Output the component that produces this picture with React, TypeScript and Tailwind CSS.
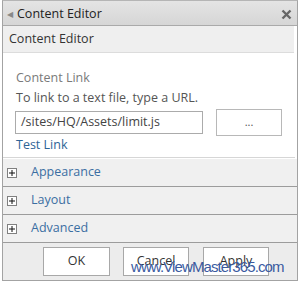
import React from 'react';

const sections = ['Appearance', 'Layout', 'Advanced'];

function PlusBox() {
  return (
    <span className="flex h-[10px] w-[10px] items-center justify-center border border-[#808080] bg-white">
      <svg width="6" height="6" viewBox="0 0 6 6" aria-hidden="true">
        <path d="M0 3h6M3 0v6" stroke="#111" strokeWidth="1" />
      </svg>
    </span>
  );
}

export default function App() {
  return (
    <div
      className="relative h-[284px] w-[302px] overflow-hidden bg-white text-[12.5px] text-[#444]"
      style={{ fontFamily: '"Open Sans", "Noto Sans", sans-serif' }}
    >
      <div className="ml-[2px] flex h-[281px] w-[296px] flex-col border border-[#a3a3a3] border-t-[#b5b5b5]">
        {/* Title bar */}
        <div className="flex h-[25px] items-center border-b border-[#aaaaaa] bg-gradient-to-b from-[#e4e4e4] to-[#d6d6d6] pl-[4px] pr-[5px] pt-[2px]">
          <span className="mr-[4px] text-[8px] text-[#888]">◀</span>
          <span className="text-[12.5px] leading-none text-[#222]">Content Editor</span>
          <svg className="ml-auto" width="11" height="11" viewBox="0 0 11 11" aria-hidden="true">
            <path d="M1.5 1.5l8 8M9.5 1.5l-8 8" stroke="#666" strokeWidth="2.4" />
          </svg>
        </div>

        {/* Section header */}
        <div className="mr-[3px] flex h-[27px] items-center border-b border-[#dcdcdc] bg-[#efefef] pl-[6px]">
          <span className="text-[12.5px] text-[#333]">Content Editor</span>
        </div>

        {/* Body */}
        <div className="flex flex-col px-[13px] pt-[15px]">
          <div className="leading-[20px] text-[#7a7a7a]">Content Link</div>
          <div className="leading-[20px] text-[#555]">To link to a text file, type a URL.</div>
          <div className="-ml-[1px] mt-[1px] flex items-center">
            <div className="flex h-[23px] w-[188px] items-center border border-[#ababab] pl-[5px] text-[#444]">
              /sites/HQ/Assets/limit.js
            </div>
            <div className="ml-[13px] flex h-[27px] w-[66px] items-center justify-center border border-[#b8b8b8] text-[11px] text-[#555]">
              ...
            </div>
          </div>
          <div className="leading-[18px] text-[#2d6496]">Test Link</div>
        </div>
        <div className="mr-[2px] mt-[2px] h-[2px] border-b border-[#d6d6d6]" />

        {/* Collapsed sections */}
        <div className="mt-[1px] flex flex-col">
          {sections.map((name) => (
            <div
              key={name}
              className="flex h-[28px] items-center gap-[14px] border-b border-[#9c9c9c] bg-[#f0f0f0] pl-[4px]"
            >
              <PlusBox />
              <span className="text-[#3b6ea2]">{name}</span>
            </div>
          ))}
        </div>

        {/* Footer */}
        <div className="flex flex-1 items-center bg-[#ececec] pl-[40px]">
          <div className="flex h-[29px] w-[67px] items-center justify-center border border-[#a8a8a8] bg-white text-[#333]">OK</div>
          <div className="ml-[13px] flex h-[29px] w-[66px] items-center justify-center border border-[#a8a8a8] bg-white text-[#333]">Cancel</div>
          <div className="ml-[14px] flex h-[29px] w-[66px] items-center justify-center border border-[#a8a8a8] bg-white text-[#333]">Apply</div>
        </div>
      </div>

      {/* Watermark */}
      <div
        className="absolute left-[131px] top-[259px] text-[15px] leading-none tracking-[-0.9px] text-[#3a5a9f]"
        style={{ fontFamily: '"Liberation Sans", Arial, sans-serif' }}
      >
        www.ViewMaster365.com
      </div>
    </div>
  );
}
